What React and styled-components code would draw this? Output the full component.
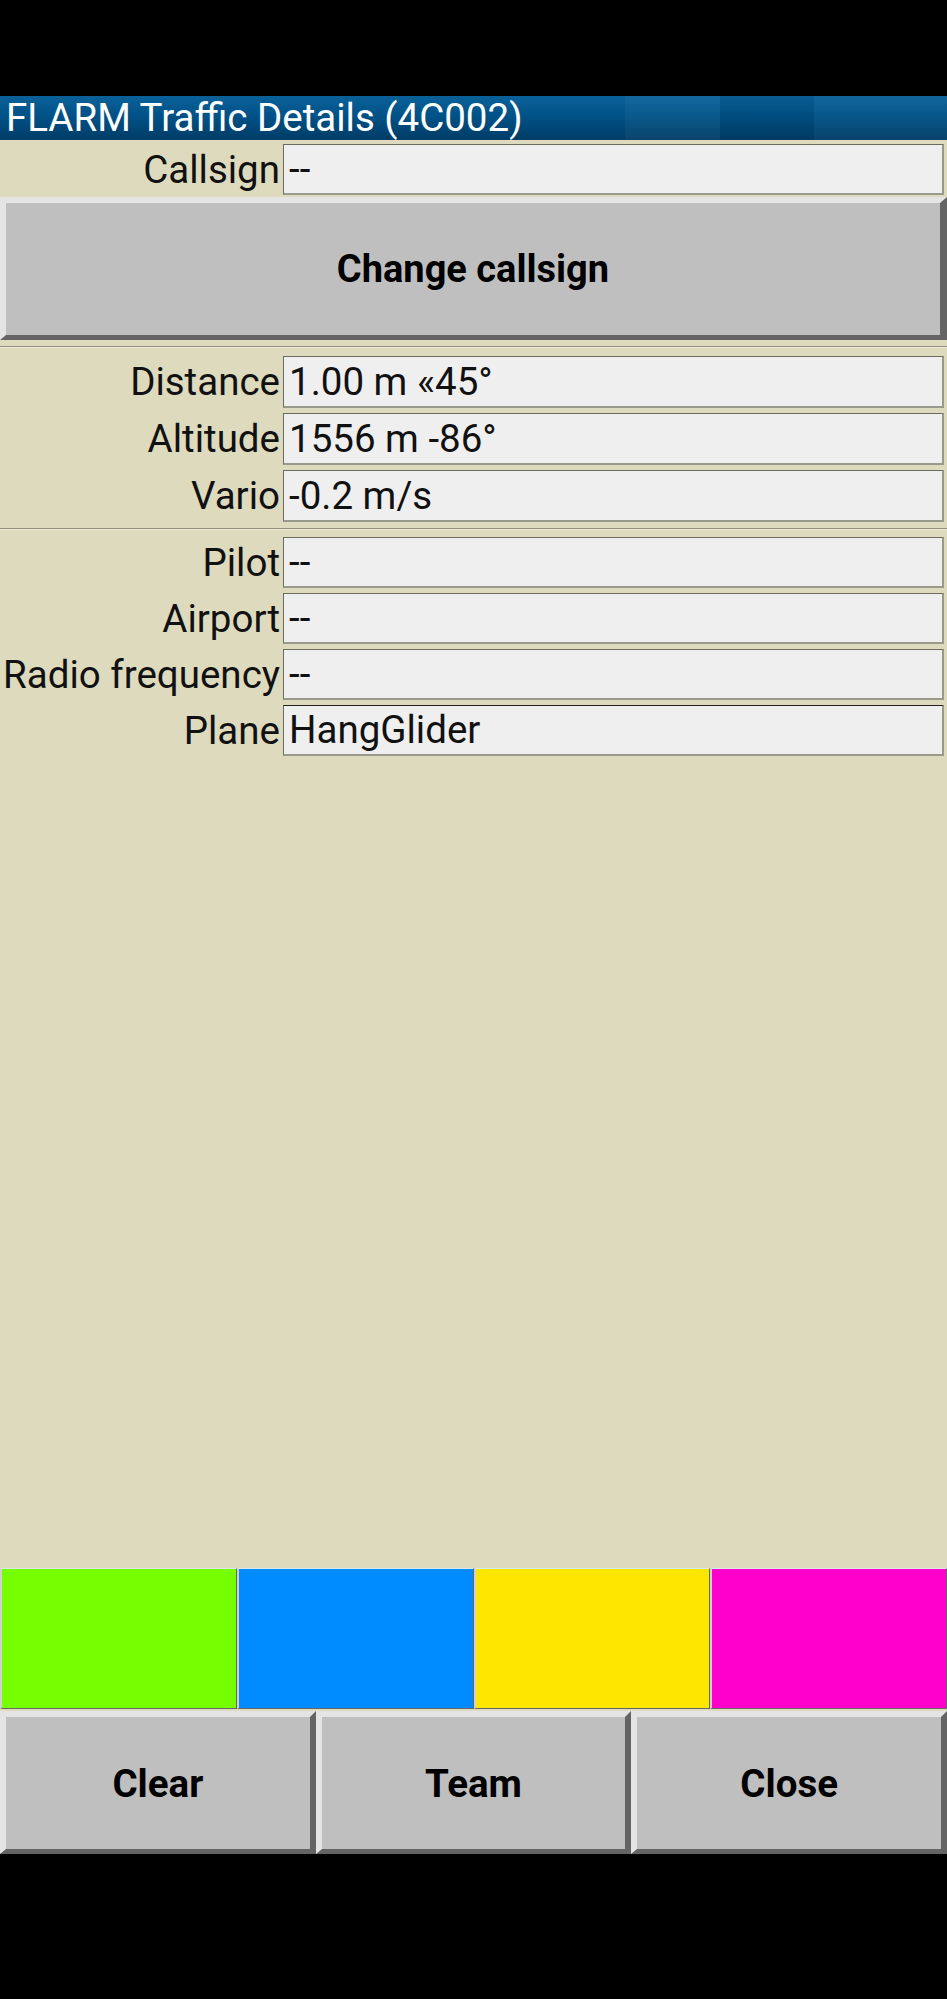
import { Fragment } from 'react';
import styled, { createGlobalStyle } from 'styled-components';

const GlobalStyle = createGlobalStyle`
    html, body {
        margin: 0;
        padding: 0;
        background: #000;
    }
    body {
        font-family: Roboto, "Liberation Sans", sans-serif;
    }
`;

const Screen = styled.div`
    display: flex;
    flex-direction: column;
    width: 947px;
    height: 1999px;
    background: #000;
`;

const StatusGap = styled.div`
    height: 96px;
    flex-shrink: 0;
`;

const Dialog = styled.div`
    display: flex;
    flex-direction: column;
    height: 1758px;
    background: #dedabe;
`;

const TitleBar = styled.div`
    height: 44px;
    padding-left: 6px;
    background:
        linear-gradient(90deg, rgba(255,255,255,0) 0 66%, rgba(255,255,255,0.04) 66% 76%, rgba(0,0,0,0.05) 76% 86%, rgba(255,255,255,0.03) 86% 100%),
        linear-gradient(180deg, #0a6199 0%, #005287 45%, #003c66 100%);
    color: #fff;
    font-size: 38.5px;
    line-height: 44px;
    white-space: nowrap;
`;

const Form = styled.div`
    display: grid;
    grid-template-columns: 280px 1fr;
    column-gap: 3px;
    row-gap: 5px;
    padding-right: 3px;
    margin-top: ${p => p.$top || 0}px;
`;

const Label = styled.div`
    height: ${p => p.$h || 51}px;
    line-height: ${p => p.$h || 51}px;
    text-align: right;
    font-size: 38.5px;
    color: #111;
    white-space: nowrap;
`;

const Field = styled.div`
    height: ${p => p.$h || 51}px;
    box-sizing: border-box;
    padding-left: 5px;
    background: #efefef;
    border-top: 1px solid ${p => (p.$dark ? '#222' : '#6b6b5e')};
    border-left: 1px solid #6b6b5e;
    border-bottom: 2px solid #9a9a8c;
    border-right: 2px solid #9a9a8c;
    font-size: 38.5px;
    line-height: ${p => (p.$h || 51) - 3}px;
    color: #111;
    white-space: nowrap;
`;

const WideButton = styled.div`
    height: 143px;
    margin-top: 2px;
    box-sizing: border-box;
    display: flex;
    align-items: center;
    justify-content: center;
    background: #bfbfbf;
    border-top: 6px solid #e4e4e4;
    border-left: 6px solid #e4e4e4;
    border-bottom: 5px solid #646464;
    border-right: 7px solid #646464;
    font-size: 38px;
    font-weight: 700;
    color: #000;
`;

const Divider = styled.div`
    height: 1px;
    background: #8f8d7c;
    margin-top: ${p => p.$top}px;
    border-bottom: 1px solid #eeead4;
`;

const Filler = styled.div`
    flex: 1;
`;

const Swatches = styled.div`
    display: grid;
    grid-template-columns: repeat(4, 1fr);
    height: 141px;
`;

const Swatch = styled.div`
    background: ${p => p.$color};
    border-top: 1px solid #d9e8e8;
    border-left: 2px solid #d0d0d0;
    border-right: 1px solid #666;
    border-bottom: 1px solid #666;
`;

const ButtonRow = styled.div`
    display: grid;
    grid-template-columns: repeat(3, 1fr);
    height: 143px;
    margin-top: 2px;
`;

const Button = styled.div`
    box-sizing: border-box;
    display: flex;
    align-items: center;
    justify-content: center;
    background: #bfbfbf;
    border-top: 6px solid #e4e4e4;
    border-left: 6px solid #e4e4e4;
    border-bottom: 5px solid #646464;
    border-right: 6px solid #646464;
    font-size: 38.5px;
    font-weight: 700;
    color: #000;
`;

const topRows = [
    ['Distance', '1.00 m «45°'],
    ['Altitude', '1556 m -86°'],
    ['Vario', '-0.2 m/s'],
];

const infoRows = [
    ['Pilot', '--'],
    ['Airport', '--'],
    ['Radio frequency', '--'],
    ['Plane', 'HangGlider'],
];

const colors = ['#76ff00', '#008cff', '#ffe600', '#ff00cc'];

export default function App() {
    return (
        <Screen>
            <GlobalStyle />
            <StatusGap />
            <Dialog>
                <TitleBar>FLARM Traffic Details (4C002)</TitleBar>

                <Form $top={4}>
                    <Label>Callsign</Label>
                    <Field>--</Field>
                </Form>

                <WideButton>Change callsign</WideButton>

                <Divider $top={6} />

                <Form $top={8}>
                    {topRows.map(([label, value]) => (
                        <Fragment key={label}>
                            <Label $h={52}>{label}</Label>
                            <Field $h={52}>{value}</Field>
                        </Fragment>
                    ))}
                </Form>

                <Divider $top={6} />

                <Form $top={7}>
                    {infoRows.map(([label, value]) => (
                        <Fragment key={label}>
                            <Label>{label}</Label>
                            <Field $dark={label === 'Plane'}>{value}</Field>
                        </Fragment>
                    ))}
                </Form>

                <Filler />

                <Swatches>
                    {colors.map(c => (
                        <Swatch key={c} $color={c} />
                    ))}
                </Swatches>

                <ButtonRow>
                    <Button>Clear</Button>
                    <Button>Team</Button>
                    <Button>Close</Button>
                </ButtonRow>
            </Dialog>
        </Screen>
    );
}
